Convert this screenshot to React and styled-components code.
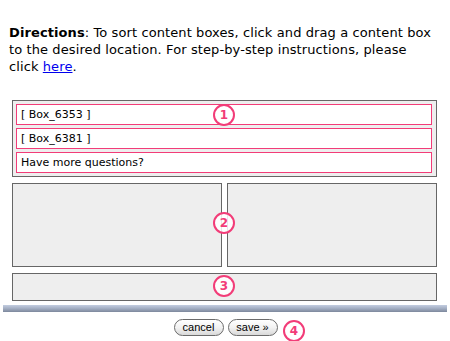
import React from 'react'
import styled, { createGlobalStyle } from 'styled-components'

const GlobalStyle = createGlobalStyle`
  body {
    margin: 0;
    background: #fff;
    font-family: "DejaVu Sans", Verdana, sans-serif;
    color: #000;
  }
`
const Page = styled.div`
  position: relative;
  width: 450px;
  height: 341px;
  overflow: hidden;
`
const Directions = styled.p`
  margin: 0;
  width: 429px;
  padding: 24px 0 0 9px;
  font-size: 13px;
  letter-spacing: 0.1px;
  line-height: 17px;
  b { font-weight: bold; }
  a { color: #0000ee; text-decoration: underline; }
`
const Layout = styled.div`
  position: relative;
  margin: 25px 13px 0 12px;
  display: flex;
  flex-direction: column;
  gap: 6px;
`
const Zone = styled.div`
  box-sizing: border-box;
  height: ${p => p.h}px;
  border: 1px solid #666;
  background: #eee;
`
const TopZone = styled(Zone)`
  padding: 3px 4px 3px 3px;
  display: flex;
  flex-direction: column;
  gap: 3px;
`
const Columns = styled.div`
  display: grid;
  grid-template-columns: 1fr 1fr;
  gap: 5px;
`
const ContentBox = styled.div`
  box-sizing: border-box;
  height: 21px;
  border: 1px solid #f23c78;
  background: #fff;
  display: flex;
  align-items: center;
  padding: 0 4px;
  font-size: 11px;
`
const Callout = styled.div`
  position: absolute;
  left: ${p => p.x}px;
  top: ${p => p.y}px;
  box-sizing: border-box;
  width: 22px;
  height: 22px;
  border: 2px solid #f23c78;
  border-radius: 50%;
  background: rgba(255, 255, 255, 0.85);
  color: #f23c78;
  font-family: "DejaVu Sans", Verdana, sans-serif;
  font-weight: bold;
  font-size: 12px;
  display: flex;
  align-items: center;
  justify-content: center;
`
const Bar = styled.div`
  height: 7px;
  margin: 4px 3px 0;
  background: linear-gradient(#c3cde0, #a6b1c6 45%, #7d889c);
`
const Actions = styled.div`
  position: relative;
  display: flex;
  justify-content: center;
  gap: 4px;
  margin-top: 7px;
  padding-left: 1px;
`
const Button = styled.button`
  box-sizing: border-box;
  width: ${p => p.w}px;
  height: 17px;
  padding: 0;
  border: 1px solid #6b6b6b;
  border-radius: 9px;
  background: linear-gradient(#ffffff, #f2f2f2 50%, #d9d9d9);
  font-family: "Liberation Sans", Arial, sans-serif;
  font-size: 11px;
  color: #000;
  line-height: 15px;
`

export default function App() {
  return (
    <Page>
      <GlobalStyle />
      <Directions>
        <b>Directions</b>: To sort content boxes, click and drag a content box to the desired location. For step-by-step instructions, please click <a href="#">here</a>.
      </Directions>
      <Layout>
        <TopZone h={77}>
          <ContentBox>[ Box_6353 ]</ContentBox>
          <ContentBox>[ Box_6381 ]</ContentBox>
          <ContentBox>Have more questions?</ContentBox>
        </TopZone>
        <Columns>
          <Zone h={84} />
          <Zone h={84} />
        </Columns>
        <Zone h={28} />
        <Callout x={201} y={4}>1</Callout>
        <Callout x={201} y={112}>2</Callout>
        <Callout x={201} y={175}>3</Callout>
      </Layout>
      <Bar />
      <Actions>
        <Button w={50}>cancel</Button>
        <Button w={50}>save »</Button>
        <Callout x={283} y={1}>4</Callout>
      </Actions>
    </Page>
  )
}
